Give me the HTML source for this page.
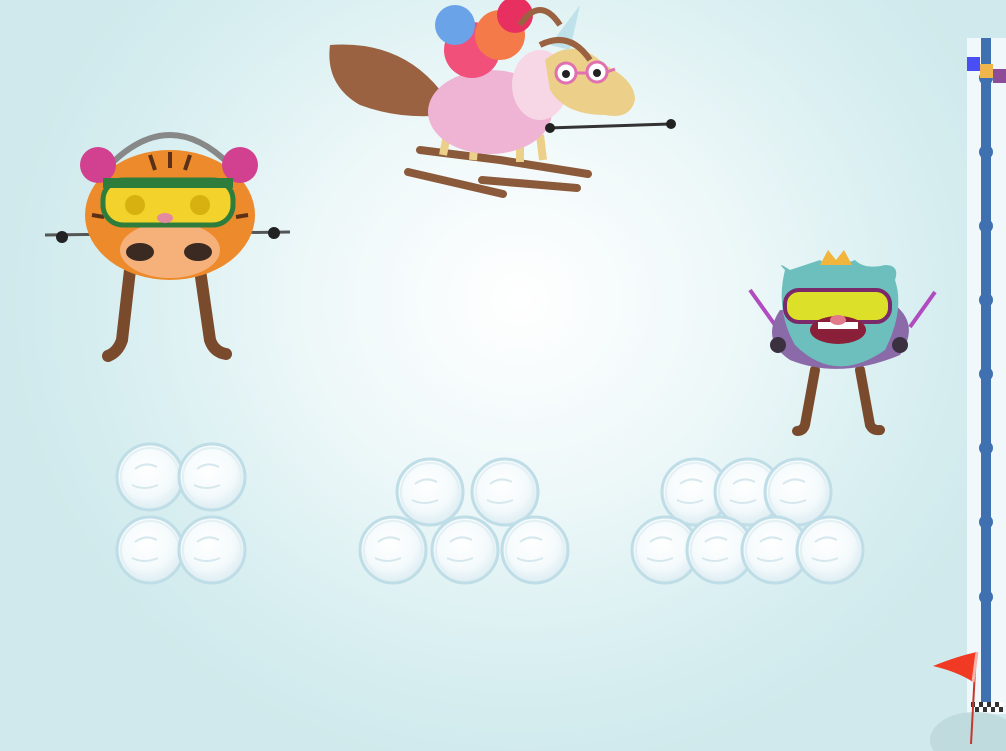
<!DOCTYPE html>
<html><head><style>
html,body{margin:0;padding:0;width:1006px;height:751px;overflow:hidden}
body{background:radial-gradient(ellipse 520px 480px at 520px 300px,#ffffff 0%,#eef8f9 40%,#d9eff1 75%,#cfe9ec 100%)}
</style></head><body>
<svg width="1006" height="751" viewBox="0 0 1006 751" style="position:absolute;left:0;top:0">
<defs>
<radialGradient id="sb" cx="45%" cy="40%" r="60%"><stop offset="0" stop-color="#ffffff"/><stop offset="0.65" stop-color="#f4fafc"/><stop offset="1" stop-color="#dbecf2"/></radialGradient>
<g id="ball"><circle r="33" fill="url(#sb)" stroke="#bfdde6" stroke-width="3"/><circle r="29" fill="none" stroke="#e3f0f4" stroke-width="2"/><path d="M-15 -8 q10 -8 22 -2 M-18 8 q12 6 26 0" stroke="#d6e8ee" stroke-width="2" fill="none"/></g>
</defs>
<use href="#ball" x="150" y="550"/><use href="#ball" x="212" y="550"/>
<use href="#ball" x="150" y="477"/><use href="#ball" x="212" y="477"/>
<use href="#ball" x="430" y="492"/><use href="#ball" x="505" y="492"/>
<use href="#ball" x="393" y="550"/><use href="#ball" x="465" y="550"/><use href="#ball" x="535" y="550"/>
<use href="#ball" x="695" y="492"/><use href="#ball" x="748" y="492"/><use href="#ball" x="798" y="492"/>
<use href="#ball" x="665" y="550"/><use href="#ball" x="720" y="550"/><use href="#ball" x="775" y="550"/><use href="#ball" x="830" y="550"/>

<g>
<path d="M130 270 L122 340 q-4 12 -14 16" stroke="#7a4a2c" stroke-width="12" fill="none" stroke-linecap="round"/>
<path d="M200 270 L210 340 q4 12 16 14" stroke="#7a4a2c" stroke-width="12" fill="none" stroke-linecap="round"/>
<path d="M45 235 L290 232" stroke="#555" stroke-width="3"/>
<circle cx="62" cy="237" r="6" fill="#222"/><circle cx="274" cy="233" r="6" fill="#222"/>
<path d="M110 165 q60 -60 120 0" stroke="#888" stroke-width="6" fill="none"/>
<ellipse cx="170" cy="215" rx="85" ry="65" fill="#ec8a2c"/>
<path d="M150 155 l5 15 M170 152 l0 16 M190 155 l-5 15 M92 215 l12 2 M248 215 l-12 2" stroke="#5a3018" stroke-width="4"/>
<ellipse cx="170" cy="250" rx="50" ry="28" fill="#f6b07a"/>
<circle cx="98" cy="165" r="18" fill="#d2418f"/><circle cx="240" cy="165" r="18" fill="#d2418f"/>
<rect x="103" y="180" width="130" height="45" rx="20" fill="#f2d22b" stroke="#2f7d3c" stroke-width="5"/>
<rect x="103" y="178" width="130" height="10" fill="#2f7d3c"/>
<circle cx="135" cy="205" r="10" fill="#d6b10f"/><circle cx="200" cy="205" r="10" fill="#d6b10f"/>
<ellipse cx="165" cy="218" rx="8" ry="5" fill="#e48aa0"/>
<ellipse cx="140" cy="252" rx="14" ry="9" fill="#3a2a22"/><ellipse cx="198" cy="252" rx="14" ry="9" fill="#3a2a22"/>
</g>

<g>
<path d="M408 172 l95 22 M420 150 l80 10 M482 180 l95 8 M500 160 l88 14" stroke="#8b5a3a" stroke-width="8" stroke-linecap="round"/>
<path d="M448 130 l-5 25 M475 135 l-2 25 M520 140 l0 22 M540 135 l3 25" stroke="#ecd08a" stroke-width="8"/>
<path d="M440 90 q-40 -50 -110 -45 q-5 40 30 60 q40 15 85 10 z" fill="#9a6240"/>
<ellipse cx="490" cy="112" rx="62" ry="42" fill="#efb3d4"/>
<ellipse cx="540" cy="85" rx="28" ry="35" fill="#f7d7e6"/>
<path d="M545 60 q30 -25 60 5 q30 15 30 35 q-5 20 -30 15 q-40 0 -55 -25 z" fill="#ecd08a"/>
<path d="M550 45 l30 -40 l-10 45 z" fill="#bfe2ea"/>
<circle cx="472" cy="50" r="28" fill="#f0507a"/><circle cx="500" cy="35" r="25" fill="#f47a4a"/><circle cx="455" cy="25" r="20" fill="#6aa3e8"/><circle cx="515" cy="15" r="18" fill="#e83060"/>
<path d="M520 25 q20 -30 40 0 M540 45 q30 -15 50 15" stroke="#9a6240" stroke-width="6" fill="none"/>
<circle cx="566" cy="73" r="10" fill="#fff" stroke="#e070b0" stroke-width="3"/><circle cx="597" cy="72" r="10" fill="#fff" stroke="#e070b0" stroke-width="3"/>
<path d="M576 73 h11 M607 72 l8 -3" stroke="#e070b0" stroke-width="3"/>
<circle cx="566" cy="74" r="4" fill="#222"/><circle cx="597" cy="73" r="4" fill="#222"/>
<path d="M548 128 L670 124" stroke="#333" stroke-width="3"/><circle cx="550" cy="128" r="5" fill="#222"/><circle cx="671" cy="124" r="5" fill="#222"/>
</g>

<g>
<path d="M815 370 l-10 55 q-2 6 -8 6 M860 370 l10 55 q3 6 10 5" stroke="#7a4a2c" stroke-width="10" fill="none" stroke-linecap="round"/>
<path d="M750 290 l25 35 M935 292 l-25 35" stroke="#b04bc0" stroke-width="4"/>
<path d="M780 310 q-20 30 10 50 q50 20 110 -5 q20 -30 -5 -50 z" fill="#8a6aa8"/>
<path d="M790 270 q-15 -10 -5 0 q-10 40 10 75 q40 40 90 5 q20 -40 10 -70 q5 -15 -10 -15 q-20 5 -30 -5 q-25 10 -35 0 q-15 5 -30 10 z" fill="#6dbfbd"/>
<path d="M820 265 l8 -15 l8 10 l8 -10 l8 15 z" fill="#f0b53a"/>
<rect x="785" y="290" width="105" height="32" rx="14" fill="#dde028" stroke="#7a2a6a" stroke-width="4"/>
<ellipse cx="838" cy="330" rx="28" ry="14" fill="#8a1f3a"/><rect x="818" y="322" width="40" height="7" fill="#fff"/>
<ellipse cx="838" cy="320" rx="8" ry="5" fill="#e27a8a"/>
<circle cx="778" cy="345" r="8" fill="#3a3040"/><circle cx="900" cy="345" r="8" fill="#3a3040"/>
</g>

<rect x="967" y="38" width="39" height="676" fill="#f0f8fb"/>
<rect x="981" y="38" width="10" height="668" fill="#3f71b1"/>
<g fill="#3f71b1"><circle cx="986" cy="78" r="7"/><circle cx="986" cy="152" r="7"/><circle cx="986" cy="226" r="7"/><circle cx="986" cy="300" r="7"/><circle cx="986" cy="374" r="7"/><circle cx="986" cy="448" r="7"/><circle cx="986" cy="522" r="7"/><circle cx="986" cy="597" r="7"/></g>
<rect x="967" y="57" width="13" height="14" fill="#4a4ff5"/>
<rect x="993" y="69" width="13" height="14" fill="#8d4c98"/>
<rect x="980" y="64" width="13" height="14" fill="#f1b64b"/>
<ellipse cx="975" cy="740" rx="45" ry="28" fill="#bcd7da" opacity="0.8"/>
<g><rect x="971" y="702" width="32" height="10" fill="#fff"/>
<path d="M971 702h4v5h-4zM979 702h4v5h-4zM987 702h4v5h-4zM995 702h4v5h-4zM975 707h4v5h-4zM983 707h4v5h-4zM991 707h4v5h-4zM999 707h4v5h-4z" fill="#333"/></g>
<line x1="976" y1="652" x2="971" y2="744" stroke="#c8352b" stroke-width="2"/>
<path d="M933 666 q25 -10 44 -14 l-4 30 q-15 -10 -40 -16 z" fill="#f03a23"/>
<path d="M977 652 l-4 30" stroke="#f7b2aa" stroke-width="3"/>
</svg>
</body></html>
